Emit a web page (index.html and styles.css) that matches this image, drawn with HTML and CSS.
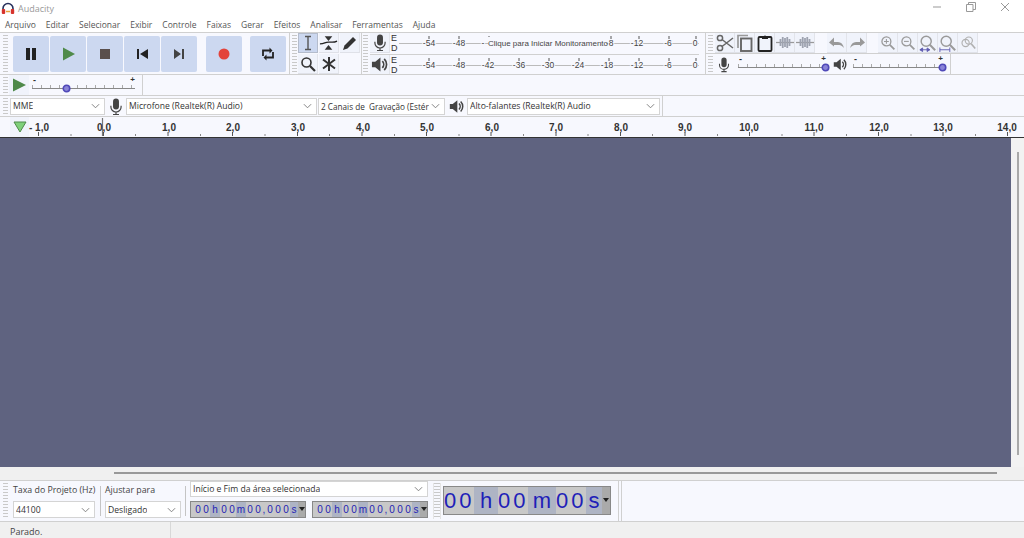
FILE: index.html
```html
<!DOCTYPE html>
<html lang="pt-BR">
<head>
  <meta charset="UTF-8" />
  <title>Audacity</title>
  <link rel="stylesheet" href="styles.css">
</head>
<body>
  <svg class="defs" width="0" height="0">
    <defs>
      <symbol id="mic" viewBox="0 0 16 20">
        <rect x="4.500" y="0.500" width="7" height="13" rx="3.500" fill="#444"/>
        <path d="M2 9v1.500a6 6 0 0 0 12 0V9M8 16.500V19M4.500 19.500h7" fill="none" stroke="#444" stroke-width="1.400"/>
      </symbol>
      <symbol id="speaker" viewBox="0 0 18 18">
        <path d="M1 6h3.500L10 1.500v15L4.500 12H1z" fill="#444"/>
        <path d="M12 5.500a5 5 0 0 1 0 7M14 3a8.500 8.500 0 0 1 0 12" fill="none" stroke="#444" stroke-width="1.800"/>
      </symbol>
      <symbol id="thumb" viewBox="0 0 10 10">
        <circle cx="5" cy="5" r="3.600" fill="#8a84d8" stroke="#4f48b8" stroke-width="1.800"/>
      </symbol>
      <symbol id="chevron" viewBox="0 0 10 6">
        <path d="M1 1l4 4 4-4" fill="none" stroke="#777" stroke-width="1"/>
      </symbol>
      <symbol id="lens" viewBox="0 0 20 20">
        <circle cx="8" cy="8" r="5.600" fill="none" stroke="#9a9a9a" stroke-width="1.600"/>
        <path d="M12 12l6 6" stroke="#9a9a9a" stroke-width="2.200"/>
      </symbol>
      <symbol id="wave" viewBox="0 0 20 14">
        <path d="M0 7h20" stroke="#999" stroke-width="1.400"/>
        <path d="M5 3v8M7.500 1v12M10 2v10M12.500 1v12M15 3v8" stroke="#9ea3b0" stroke-width="2"/>
      </symbol>
    </defs>
  </svg>

  <div class="titlebar">
    <svg class="app-icon" viewBox="0 0 14 14" width="14" height="14">
      <path d="M2 8V6.500a5 5 0 0 1 10 0V8" fill="none" stroke="#26305c" stroke-width="1.600"/>
      <rect x="0.800" y="7" width="3.400" height="5" rx="1" fill="#d6332c"/>
      <rect x="9.800" y="7" width="3.400" height="5" rx="1" fill="#d6332c"/>
      <path d="M5 9.500h4" stroke="#e8a23a" stroke-width="1.500"/>
    </svg>
    <span class="app-name">Audacity</span>
    <div class="win-btns">
      <svg viewBox="0 0 10 10" width="10" height="10"><path d="M1 5h8" stroke="#999"/></svg>
      <svg viewBox="0 0 10 10" width="10" height="10"><path d="M.5 2.500h6.500v7H.5zM2.500 2.500V.5h7v7H7" fill="none" stroke="#999"/></svg>
      <svg viewBox="0 0 10 10" width="10" height="10"><path d="M1 1l8 8M9 1l-8 8" stroke="#999"/></svg>
    </div>
  </div>

  <ul class="menubar">
    <li>Arquivo</li><li>Editar</li><li>Selecionar</li><li>Exibir</li><li>Controle</li><li>Faixas</li><li>Gerar</li><li>Efeitos</li><li>Analisar</li><li>Ferramentas</li><li>Ajuda</li>
  </ul>

  <div class="row row-main">
    <div class="bar transport">
      <span class="grip"></span>
      <div class="tbtn"><svg viewBox="0 0 16 16" width="16" height="16"><path d="M3 2h4v12H3zM9 2h4v12H9z" fill="#222"/></svg></div>
      <div class="tbtn"><svg viewBox="0 0 16 16" width="16" height="16"><path d="M3 1.500L15 8 3 14.500z" fill="#4f8a4a"/></svg></div>
      <div class="tbtn"><svg viewBox="0 0 16 16" width="16" height="16"><path d="M3 3h10v10H3z" fill="#5a4f4c"/></svg></div>
      <div class="tbtn"><svg viewBox="0 0 16 16" width="16" height="16"><path d="M3 3h2v10H3zM14 3v10L6 8z" fill="#222"/></svg></div>
      <div class="tbtn"><svg viewBox="0 0 16 16" width="16" height="16"><path d="M13 3h-2v10h2zM3 3v10l7-5z" fill="#444"/></svg></div>
      <div class="tbtn gap-l first"><svg viewBox="0 0 16 16" width="16" height="16"><circle cx="8" cy="8" r="5.500" fill="#e3433b"/></svg></div>
      <div class="tbtn gap-l"><svg viewBox="0 0 16 16" width="16" height="16"><path d="M3 10V4.500h8M13 6v5.500H5" fill="none" stroke="#222" stroke-width="1.800"/><path d="M9.500 1.500l3 3-3 3zM6.500 8.500l-3 3 3 3z" fill="#222"/></svg></div>
    </div>

    <div class="bar tools">
      <span class="grip"></span>
      <div class="tool-grid">
        <div class="tool active"><svg viewBox="0 0 14 16" width="14" height="16"><path d="M4 1.500h6M4 14.500h6M7 1.500v13" fill="none" stroke="#555" stroke-width="1.400"/></svg></div>
        <div class="tool"><svg viewBox="0 0 20 16" width="20" height="16"><path d="M1 9c5 0 5-2 9-2s5 1 9-1" fill="none" stroke="#222" stroke-width="1.300"/><path d="M6 1h8l-4 5zM10 10l4 5H6z" fill="#333"/></svg></div>
        <div class="tool"><svg viewBox="0 0 16 16" width="16" height="16"><path d="M1 15l1.500-4.500 8.500-8.500 3 3-8.500 8.500z" fill="#333"/></svg></div>
        <div class="tool"><svg viewBox="0 0 16 16" width="16" height="16"><circle cx="6.500" cy="6.500" r="4.500" fill="none" stroke="#333" stroke-width="1.600"/><path d="M10 10l5 5" stroke="#333" stroke-width="2.200"/></svg></div>
        <div class="tool"><svg viewBox="0 0 16 16" width="16" height="16"><path d="M8 1v14M2 3.500l12 9M14 3.500l-12 9" stroke="#333" stroke-width="2"/></svg></div>
        <div class="tool blank"></div>
      </div>
    </div>

    <div class="bar meters">
      <span class="grip"></span>
      <div class="meter-rows">
        <div class="meter-row">
          <div class="tool"><svg width="14" height="17"><use href="#mic"/></svg></div>
          <div class="ed"><span>E</span><span>D</span></div>
          <svg class="scale" viewBox="0 0 300 20" width="300" height="20">
            <path d="M0 10.500h300" stroke="#bbb"/>
            <path d="M30 3v3M60 3v3M90 3v3M212 3v3M240 3v3M270 3v3M297 3v3" stroke="#555"/>
            <g class="meter-text">
              <text x="30" y="13">-54</text><text x="60" y="13">-48</text><text x="84" y="13">-</text>
              <text x="212" y="13">8</text><text x="238" y="13">-12</text><text x="269" y="13">-6</text><text x="296" y="13">0</text>
            </g>
            <rect x="89" y="4" width="118" height="13" fill="#f7f8fe"/>
            <text class="meter-text" x="149" y="13">Clique para Iniciar Monitoramento</text>
          </svg>
        </div>
        <div class="meter-row">
          <div class="tool"><svg width="17" height="17"><use href="#speaker"/></svg></div>
          <div class="ed"><span>E</span><span>D</span></div>
          <svg class="scale" viewBox="0 0 300 20" width="300" height="20">
            <path d="M0 10.500h300" stroke="#bbb"/>
            <path d="M30 3v3M60 3v3M90 3v3M120 3v3M150 3v3M180 3v3M210 3v3M240 3v3M270 3v3M297 3v3" stroke="#555"/>
            <g class="meter-text">
              <text x="30" y="13">-54</text><text x="60" y="13">-48</text><text x="89" y="13">-42</text><text x="120" y="13">-36</text><text x="149" y="13">-30</text>
              <text x="179" y="13">-24</text><text x="208" y="13">-18</text><text x="238" y="13">-12</text><text x="269" y="13">-6</text><text x="296" y="13">0</text>
            </g>
          </svg>
        </div>
      </div>
    </div>

    <div class="right-stack">
      <div class="bar edit">
        <span class="grip"></span>
        <div class="tool"><svg viewBox="0 0 18 18" width="18" height="18"><circle cx="4" cy="4" r="2.600" fill="none" stroke="#666" stroke-width="1.500"/><circle cx="4" cy="14" r="2.600" fill="none" stroke="#666" stroke-width="1.500"/><path d="M6 5.500L17 14M6 12.500L17 4" stroke="#666" stroke-width="1.500"/></svg></div>
        <div class="tool"><svg viewBox="0 0 18 18" width="18" height="18"><path d="M12 1.500H2V14" fill="none" stroke="#999" stroke-width="1.700"/><rect x="5" y="4.500" width="10.500" height="12.500" fill="none" stroke="#666" stroke-width="1.900"/></svg></div>
        <div class="tool"><svg viewBox="0 0 18 18" width="18" height="18"><rect x="2.500" y="3" width="13" height="14" rx="1" fill="none" stroke="#222" stroke-width="1.800"/><path d="M6 5V2.500h2a1 1 0 0 1 2 0h2V5z" fill="#222"/></svg></div>
        <div class="tool"><svg width="18" height="13"><use href="#wave"/></svg></div>
        <div class="tool"><svg width="18" height="13"><use href="#wave"/></svg></div>
        <div class="tool gap-m"><svg viewBox="0 0 18 14" width="18" height="14"><path d="M4 6h6c3 0 5 2 6 6-2-2.500-4-3-6-3H4" fill="#999"/><path d="M1 6.500L6 1.500v9z" fill="#999"/></svg></div>
        <div class="tool"><svg viewBox="0 0 18 14" width="18" height="14"><path d="M14 6H8c-3 0-5 2-6 6 2-2.500 4-3 6-3h6" fill="#999"/><path d="M17 6.500L12 1.500v9z" fill="#999"/></svg></div>
        <div class="tool gap-s"><svg viewBox="0 0 20 20" width="16" height="16"><use href="#lens"/><path d="M5 8h6M8 5v6" stroke="#9a9a9a" stroke-width="1.300"/></svg></div>
        <div class="tool"><svg viewBox="0 0 20 20" width="16" height="16"><use href="#lens"/><path d="M5 8h6" stroke="#9a9a9a" stroke-width="1.300"/></svg></div>
        <div class="tool"><svg viewBox="0 0 20 20" width="18" height="18"><use href="#lens"/><path d="M1 17.500h11M1 17.500l3-2v4zM12 17.500l-3-2v4z" stroke="#5f5bb0" fill="#5f5bb0"/></svg></div>
        <div class="tool"><svg viewBox="0 0 20 20" width="18" height="18"><use href="#lens"/><path d="M1 17.500h11M1 15v5M12 15v5" stroke="#5f5bb0" fill="none"/></svg></div>
        <div class="tool"><svg viewBox="0 0 20 20" width="16" height="16"><circle cx="7" cy="10" r="4.500" fill="none" stroke="#b0b0b0" stroke-width="1.400"/><circle cx="11" cy="7" r="4.500" fill="none" stroke="#b0b0b0" stroke-width="1.400"/><path d="M14 11l5 6" stroke="#b0b0b0" stroke-width="2"/></svg></div>
      </div>
      <div class="bar mixer">
        <span class="grip"></span>
        <svg class="mix-icon" width="12" height="17"><use href="#mic"/></svg>
        <div class="slider long"><i></i><b>+</b><u></u><svg class="thumb end" width="9" height="9"><use href="#thumb"/></svg></div>
        <svg class="mix-speaker" width="14" height="15"><use href="#speaker"/></svg>
        <div class="slider long2"><i></i><b>+</b><u></u><svg class="thumb end" width="9" height="9"><use href="#thumb"/></svg></div>
      </div>
    </div>
  </div>

  <div class="row row-speed">
    <div class="bar speed">
      <span class="grip"></span>
      <div class="play-small"><svg viewBox="0 0 14 14" width="14" height="14"><path d="M1 0.500L14 7 1 13.500z" fill="#4f8a4a"/></svg></div>
      <div class="slider short"><i></i><b>+</b><u></u><svg class="thumb mid" width="9" height="9"><use href="#thumb"/></svg></div>
    </div>
  </div>

  <div class="row row-device">
    <div class="bar devices">
      <span class="grip"></span>
      <div class="select w-host"><span>MME</span><svg width="9" height="6"><use href="#chevron"/></svg></div>
      <svg class="dev-icon" width="14" height="17"><use href="#mic"/></svg>
      <div class="select w-rec"><span>Microfone (Realtek(R) Audio)</span><svg width="9" height="6"><use href="#chevron"/></svg></div>
      <div class="select w-chan"><span>2 Canais de&nbsp; Gravação (Estér</span><svg width="9" height="6"><use href="#chevron"/></svg></div>
      <svg class="dev-icon" width="15" height="15"><use href="#speaker"/></svg>
      <div class="select w-play"><span>Alto-falantes (Realtek(R) Audio</span><svg width="9" height="6"><use href="#chevron"/></svg></div>
    </div>
  </div>

  <div class="ruler">
    <div class="ruler-play"><svg viewBox="0 0 14 12" width="14" height="12"><path d="M1 1h12L7 11z" fill="#7fd07a" stroke="#4f8a4a"/></svg></div>
    <svg class="ruler-scale" viewBox="0 0 1024 20" width="1024" height="20">
      <path d="M38.500 15v4M103.500 15v4M168 15v4M232.500 15v4M297.500 15v4M362 15v4M426.500 15v4M491 15v4M556 15v4M620.500 15v4M685 15v4M749.500 15v4M814 15v4M878.500 15v4M943 15v4M1007.500 15v4" stroke="#555"/>
      <path d="M71 17v2M135.500 17v2M200.500 17v2M265 17v2M329.500 17v2M394.500 17v2M459 17v2M523.500 17v2M588 17v2M652.500 17v2M717.500 17v2M782 17v2M846.500 17v2M911 17v2M975.500 17v2" stroke="#888"/>
      <path d="M102.500 1v18" stroke="#777" stroke-width="1.200"/>
      <g class="ruler-text">
        <text x="39" y="14">- 1,0</text><text x="104" y="14">0,0</text><text x="169" y="14">1,0</text><text x="233" y="14">2,0</text><text x="298" y="14">3,0</text>
        <text x="363" y="14">4,0</text><text x="427" y="14">5,0</text><text x="492" y="14">6,0</text><text x="556" y="14">7,0</text><text x="621" y="14">8,0</text>
        <text x="685" y="14">9,0</text><text x="749" y="14">10,0</text><text x="814" y="14">11,0</text><text x="879" y="14">12,0</text><text x="943" y="14">13,0</text><text x="1007" y="14">14,0</text>
      </g>
    </svg>
  </div>

  <div class="track-wrap">
    <div class="tracks"></div>
    <div class="vscroll"><span></span></div>
  </div>
  <div class="hscroll"><span></span></div>

  <div class="bottom">
    <span class="grip"></span>
    <div class="field f-rate">
      <label>Taxa do Projeto (Hz)</label>
      <div class="select"><span>44100</span><svg width="9" height="6"><use href="#chevron"/></svg></div>
    </div>
    <span class="vsep"></span>
    <div class="field f-snap">
      <label>Ajustar para</label>
      <div class="select"><span>Desligado</span><svg width="9" height="6"><use href="#chevron"/></svg></div>
    </div>
    <span class="vsep"></span>
    <div class="field f-sel">
      <div class="select"><span>Início e Fim da área selecionada</span><svg width="9" height="6"><use href="#chevron"/></svg></div>
      <div class="times">
        <div class="time"><b>0</b><b>0</b><b class="dk">h</b><b>0</b><b>0</b><b class="dk">m</b><b>0</b><b>0</b><b class="c">,</b><b>0</b><b>0</b><b>0</b><b class="dk">s</b><em></em></div>
        <div class="time"><b>0</b><b>0</b><b class="dk">h</b><b>0</b><b>0</b><b class="dk">m</b><b>0</b><b>0</b><b class="c">,</b><b>0</b><b>0</b><b>0</b><b class="dk">s</b><em></em></div>
      </div>
    </div>
    <span class="grip grip-big"></span>
    <div class="time-big">
      <b class="n1">00</b><b class="dk">h</b><b>00</b><b class="dk mm">m</b><b>00</b><b class="dk ss">s</b><em></em>
    </div>
    <span class="end-sep"></span>
  </div>

  <div class="status"><div class="status-text">Parado.</div></div>
</body>
</html>
```

FILE: styles.css
```css
:root {
  --bar: #f7f8fe;
  --line: #d0d0d0;
  --btn: #ccd8f0;
  --tool: #f0f3fb;
}
* {
  box-sizing: border-box;
  margin: 0;
  padding: 0;
}
html, body {
  width: 1024px;
  height: 538px;
  overflow: hidden;
}
body {
  display: flex;
  flex-direction: column;
  background: #f0f0f0;
  color: #333;
  font-family: "Open Sans", "Noto Sans", sans-serif;
  font-size: 8.600px;
}
.defs {
  position: absolute;
}

/* title + menu */
.titlebar {
  height: 17px;
  background: #fff;
  display: flex;
  align-items: center;
  padding-left: 1px;
  flex: none;
}
.app-name {
  margin-left: 3px;
  color: #999;
  font-size: 9px;
}
.win-btns {
  margin-left: auto;
  display: flex;
  gap: 24px;
  padding-right: 14px;
  margin-top: -3px;
}
.menubar {
  height: 15px;
  background: #fff;
  list-style: none;
  display: flex;
  align-items: center;
  gap: 10px;
  padding-left: 5px;
  flex: none;
  color: #555;
  font-size: 8.500px;
}

/* toolbars */
.row {
  display: flex;
  background: var(--bar);
  border-top: 1px solid var(--line);
  flex: none;
}
.row-main { height: 42px; }
.row-speed { height: 21px; }
.row-device { height: 21px; }
.bar {
  display: flex;
  align-items: center;
  background: var(--bar);
}
.grip {
  width: 5px;
  margin: 2px 0 2px 3px;
  align-self: stretch;
  flex: none;
  background-image: repeating-linear-gradient(#c9c9c9 0 1px, transparent 1px 3px);
}
.transport {
  width: 290px;
  border-right: 1px solid var(--line);
}
.transport .grip { margin-right: 5px; }
.tbtn {
  width: 36px;
  height: 36px;
  margin-right: 1px;
  background: var(--btn);
  border-radius: 2px;
  display: flex;
  align-items: center;
  justify-content: center;
  flex: none;
}
.tbtn.gap-l { margin-left: 7px; }
.tbtn.first { margin-left: 8px; }
.tools {
  width: 72px;
  border-right: 1px solid var(--line);
}
.tools .grip { margin-left: 2px; }
.tool-grid {
  display: grid;
  grid-template-columns: repeat(3, 21px);
  grid-auto-rows: 20px;
  gap: 1px 0;
  margin-left: 1px;
}
.tool {
  width: 20px;
  height: 20px;
  background: var(--tool);
  border-right: 1px solid #e2e4ea;
  border-bottom: 1px solid #dfe1e8;
  display: flex;
  align-items: center;
  justify-content: center;
  flex: none;
}
.tool.active {
  background: var(--btn);
  border: 1px solid #b4bccc;
}
.tool.blank {
  background: none;
  border: 0;
}

.meters {
  width: 344px;
  border-right: 1px solid var(--line);
}
.meters .grip { margin-left: 1px; }
.meter-rows {
  display: flex;
  flex-direction: column;
}
.meter-row {
  height: 21px;
  display: flex;
  align-items: center;
  margin-left: 2px;
}
.meter-row + .meter-row { border-top: 1px solid var(--line); }
.ed {
  width: 9px;
  display: flex;
  flex-direction: column;
  padding-left: 1px;
  font-family: "Liberation Sans", sans-serif;
  font-size: 9px;
  line-height: 10px;
}
.scale { flex: none; }
.meter-text text, text.meter-text {
  font-family: "Liberation Sans", sans-serif;
  font-size: 8px;
  fill: #444;
  text-anchor: middle;
}
.meter-text text {
  font-size: 8.500px;
  paint-order: stroke;
  stroke: var(--bar);
  stroke-width: 2px;
}
.right-stack {
  display: flex;
  flex-direction: column;
  flex: 1;
}
.edit {
  height: 21px;
  border-bottom: 1px solid var(--line);
}
.edit .grip {
  margin-left: 2px;
  margin-right: 2px;
}
.tool.gap-m { margin-left: 12px; }
.tool.gap-s { margin-left: 11px; }
.mixer {
  flex: 1;
  width: 245px;
  border-right: 1px solid var(--line);
}
.mixer .grip { margin-left: 2px; }
.mix-icon { margin-left: 5px; }
.mix-speaker { margin-left: 7px; }

/* sliders */
.slider {
  position: relative;
  height: 20px;
  flex: none;
}
.slider i {
  position: absolute;
  left: 0;
  right: 0;
  top: 13px;
  height: 1px;
  background: #888;
}
.slider u {
  position: absolute;
  left: 0;
  right: 0;
  top: 10px;
  height: 3px;
  background-image: repeating-linear-gradient(90deg, #aaa 0 1px, transparent 1px 9px);
}
.slider::before {
  content: "-";
  position: absolute;
  left: 1px;
  top: 0;
  font: bold 9px "Liberation Sans", sans-serif;
}
.slider b {
  position: absolute;
  right: 0;
  top: 0;
  font: bold 8px "Liberation Sans", sans-serif;
}
.thumb {
  position: absolute;
  top: 9px;
}
.thumb.end { right: -4px; }
.slider.long { width: 88px; margin-left: 8px; }
.slider.long2 { width: 90px; margin-left: 6px; }
.slider.short { width: 103px; margin-left: 3px; }
.thumb.mid { left: 30px; }

.speed {
  width: 143px;
  border-right: 1px solid var(--line);
}
.play-small {
  width: 20px;
  height: 20px;
  margin-left: 1px;
  background: var(--tool);
  display: flex;
  align-items: center;
  justify-content: center;
}
.devices {
  width: 663px;
  border-right: 1px solid var(--line);
}
.devices .grip { margin-right: 2px; }
.select {
  height: 17px;
  background: #fff;
  border: 1px solid #d4d4d4;
  display: flex;
  align-items: center;
  justify-content: space-between;
  padding: 0 4px 0 2px;
  color: #333;
  flex: none;
  white-space: nowrap;
  overflow: hidden;
}
.select span { overflow: hidden; }
.select svg {
  flex: none;
  margin-left: 2px;
}
.w-host { width: 95px; }
.w-rec { width: 191px; }
.w-chan {
  width: 127px;
  margin-left: 1px;
  font-size: 8.200px;
}
.w-play { width: 193px; }
.dev-icon { margin: 0 3px 0 4px; flex: none; }

/* ruler */
.ruler {
  position: relative;
  height: 21px;
  flex: none;
  background: var(--bar);
  border-top: 1px solid var(--line);
  overflow: hidden;
}
.ruler-play {
  position: absolute;
  left: 10px;
  top: 0;
  width: 19px;
  height: 20px;
  background: var(--tool);
  display: flex;
  align-items: center;
  justify-content: center;
}
.ruler-scale {
  position: absolute;
  left: 0;
  top: 0;
}
.ruler-text text {
  font-family: "Liberation Sans", sans-serif;
  font-weight: bold;
  font-size: 10px;
  fill: #333;
  text-anchor: middle;
}

/* track area */
.track-wrap {
  height: 330px;
  display: flex;
  flex: none;
  border-top: 1px solid #333;
}
.tracks {
  flex: 1;
  background: #5f6380;
}
.vscroll {
  width: 13px;
  background: #f2f2f2;
  padding: 14px 0 12px 6px;
  display: flex;
}
.vscroll span {
  width: 2px;
  background: #a8a8a8;
}
.hscroll {
  height: 13px;
  flex: none;
  padding: 5px 27px 0 114px;
  background: #f0f0f0;
}
.hscroll span {
  display: block;
  height: 2px;
  background: #999;
}

/* selection bar */
.bottom {
  height: 42px;
  flex: none;
  display: flex;
  align-items: stretch;
  background: var(--bar);
  border-top: 1px solid var(--line);
  border-bottom: 1px solid var(--line);
}
.field {
  display: flex;
  flex-direction: column;
  justify-content: space-between;
  padding: 1px 0 3px;
  flex: none;
}
.field label {
  height: 16px;
  line-height: 16px;
  color: #444;
  font-size: 8.800px;
  white-space: nowrap;
}
.bottom > .grip { margin-right: 5px; }
.f-rate { width: 82px; }
.f-snap { width: 76px; }
.f-sel {
  width: 238px;
  padding-top: 0;
}
.f-rate .select, .f-snap .select { width: 100%; }
.f-sel .select { width: 100%; height: 16px; }
.vsep {
  width: 1px;
  margin: 5px 4px 5px 5px;
  background: #c4c4c4;
  flex: none;
}
.f-snap + .vsep { margin-left: 4px; }
.times {
  display: flex;
  justify-content: space-between;
}
.time {
  width: 116px;
  height: 17px;
  display: flex;
  align-items: center;
  padding-left: 3px;
  background: #c8c8c8;
  border: 1px solid #888;
  color: #2424b4;
  font-family: "Liberation Sans", sans-serif;
  font-size: 10px;
}
.time b {
  font-weight: normal;
  width: 8px;
  height: 100%;
  text-align: center;
  line-height: 15px;
}
.time b.dk { width: 10px; }
.time b.dk:nth-last-child(2) { width: 8px; }
.time b.c { width: 4px; }
.dk { background: #aeb4c4; }
.time em, .time-big em {
  margin-left: auto;
  align-self: stretch;
  width: 7px;
  background: #aaa;
  position: relative;
}
.time em::after, .time-big em::after {
  content: "";
  position: absolute;
  left: 1px;
  top: 5px;
  border: 3px solid transparent;
  border-top: 4px solid #222;
  border-bottom: 0;
}
.bottom > .grip-big {
  width: 8px;
  margin-left: 5px;
  margin-right: 2px;
  border-left: 1px solid #e4e4e4;
  border-right: 1px solid #e4e4e4;
}
.time-big {
  width: 168px;
  height: 29px;
  margin-top: 5px;
  display: flex;
  background: #c8c8c8;
  border: 1px solid #888;
  color: #1f1fb8;
  font-family: "Liberation Sans", sans-serif;
  font-size: 22px;
  line-height: 27px;
}
.time-big b {
  font-weight: normal;
  text-align: center;
  letter-spacing: 3px;
  width: 30px;
}
.time-big b.dk { width: 24px; letter-spacing: 0; }
.time-big b.mm { width: 28px; }
.time-big b.ss { width: 16px; }
.time-big em { width: 8px; }
.time-big em::after { top: 11px; }
.end-sep {
  width: 4px;
  margin-left: 7px;
  border-left: 1px solid var(--line);
  border-right: 1px solid var(--line);
}

.status {
  flex: 1;
  display: flex;
  background: #f0f0f0;
}
.status-text {
  width: 171px;
  padding: 3px 0 0 10px;
  border-right: 1px solid #d8d8d8;
  color: #444;
  font-size: 9px;
}
```
